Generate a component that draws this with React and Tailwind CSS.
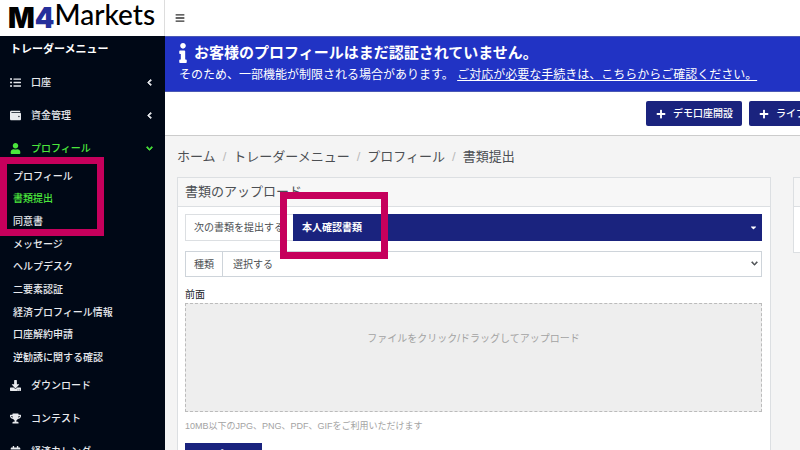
import React, { useState } from "react";
import {
  FaBars,
  FaCalendarAlt,
  FaCaretDown,
  FaChevronDown,
  FaChevronLeft,
  FaDownload,
  FaInfo,
  FaListUl,
  FaPlus,
  FaTrophy,
  FaUser,
  FaWallet,
} from "react-icons/fa";

const profileLinks = [
  "プロフィール",
  "書類提出",
  "同意書",
  "メッセージ",
  "ヘルプデスク",
  "二要素認証",
  "経済プロフィール情報",
  "口座解約申請",
  "逆勧誘に関する確認",
];

const breadcrumbs = ["ホーム", "トレーダーメニュー", "プロフィール", "書類提出"];

function Logo() {
  return (
    <a href="#" aria-label="M4Markets" className="flex h-9 shrink-0 items-center border-r border-[#ddd] bg-white pl-2">
      <span className="font-[Inter] text-[28px] font-black leading-7 text-black">M</span>
      <span className="font-[Inter] text-[28px] font-black leading-7 text-[#26309a]">4</span>
      <span className="self-start font-[Lato] text-[28px] leading-7 text-black">Markets</span>
    </a>
  );
}

function MenuItem({ icon: Icon, label, arrow: Arrow, active }) {
  return (
    <a
      href="#"
      className={`flex h-[33px] items-center pl-[10px] pr-3 ${active ? "text-[#4be63c]" : "text-[#e8eaee]"}`}
    >
      <Icon className="mr-[10px] size-[11px]" />
      <span className="flex-1">{label}</span>
      {Arrow && <Arrow className="size-[7px] stroke-current stroke-[60]" />}
    </a>
  );
}

function Sidebar() {
  return (
    <aside className="relative flex w-[165px] shrink-0 flex-col bg-[#000816] text-[10px] font-medium text-[#e8eaee]">
      <Logo />
      <h2 className="flex h-[30px] shrink-0 items-center pb-1 pl-[10px] text-[11px] font-bold text-white">
        トレーダーメニュー
      </h2>
      <nav>
        <MenuItem icon={FaListUl} label="口座" arrow={FaChevronLeft} />
        <MenuItem icon={FaWallet} label="資金管理" arrow={FaChevronLeft} />
        <MenuItem icon={FaUser} label="プロフィール" arrow={FaChevronDown} active />
        <ul className="grid h-51 grid-rows-9 pl-[13px]">
          {profileLinks.map((label) => (
            <li key={label} className="flex items-center">
              <a href="#" className={label === "書類提出" ? "text-[#4be63c]" : ""}>{label}</a>
            </li>
          ))}
        </ul>
        <MenuItem icon={FaDownload} label="ダウンロード" />
        <MenuItem icon={FaTrophy} label="コンテスト" />
        <MenuItem icon={FaCalendarAlt} label="経済カレンダー" />
      </nav>
      {/* highlight around the document links */}
      <div className="pointer-events-none absolute left-0 top-[157px] h-[79px] w-[104px] border-[7px] border-[#c6005c]" />
    </aside>
  );
}

function Banner() {
  return (
    <section className="h-14 border-y border-[#4a58b4] bg-[#2133c4] px-3 pt-1 text-white">
      <h1 className="flex items-center text-[15px] font-bold leading-6">
        <FaInfo className="mr-[5px] h-5 w-3" />
        お客様のプロフィールはまだ認証されていません。
      </h1>
      <p className="whitespace-nowrap pl-0.5 text-[12px] leading-5">
        そのため、一部機能が制限される場合があります。{" "}
        <a href="#" className="underline">ご対応が必要な手続きは、こちらからご確認ください。</a>
      </p>
    </section>
  );
}

function AccountButton({ children }) {
  return (
    <button
      type="button"
      className="flex h-[25px] items-center gap-[7px] rounded-xs bg-[#1a237e] pl-[10px] pr-[9px] text-[10px] font-medium text-white"
    >
      <FaPlus className="size-[10px]" />
      {children}
    </button>
  );
}

function UploadCard() {
  const [kind, setKind] = useState("選択する");

  return (
    <section className="min-w-0 flex-1 border border-[#dcdfe2] bg-white">
      <h2 className="h-[29px] border-b border-[#dcdfe2] bg-[#f7f7f7] px-[7px] text-[13px] leading-7">
        書類のアップロード
      </h2>
      <div className="pb-3 pl-[7px] pr-2 pt-[7px]">
        <div className="relative z-10 flex h-[27px]">
          <span
            id="doc-label"
            className="flex w-[108px] items-center overflow-hidden whitespace-nowrap border border-r-0 border-[#dcdfe2] pl-2 text-[10px]"
          >
            次の書類を提出する
          </span>
          <button
            type="button"
            aria-describedby="doc-label"
            className="flex flex-1 items-center justify-between bg-[#1a237e] pl-[9px] pr-1 text-[10px] font-bold text-white"
          >
            本人確認書類
            <FaCaretDown className="size-[9px]" />
          </button>
          {/* highlight around the selected document */}
          <div className="pointer-events-none absolute -top-[22px] left-[95px] h-[67px] w-[108px] border-[7px] border-[#c6005c]" />
        </div>

        <div className="relative mt-[10px] flex h-[26px] border border-[#ced4da] text-[10px]">
          <label htmlFor="kind" className="flex items-center border-r border-[#ced4da] px-2">種類</label>
          <select
            id="kind"
            value={kind}
            onChange={(e) => setKind(e.target.value)}
            className="flex-1 appearance-none bg-transparent pl-[10px] outline-none"
          >
            <option>選択する</option>
          </select>
          <FaChevronDown className="pointer-events-none absolute right-[3px] top-2 size-[7px] stroke-current stroke-[40]" />
        </div>

        <label htmlFor="front" className="mt-[10px] block text-[10px] leading-4 text-[#212529]">前面</label>
        <button
          id="front"
          type="button"
          className="block h-[109px] w-full border border-dashed border-[#bbb] bg-[#eee] pb-[38px] text-[10px] text-[#a3a3a3]"
        >
          ファイルをクリック/ドラッグしてアップロード
        </button>
        <p className="mt-[5px] text-[9px] leading-[18px] text-[#a3a3a3]">
          10MB以下のJPG、PNG、PDF、GIFをご利用いただけます
        </p>
        <button type="button" className="mt-2 block h-[26px] w-[77px] bg-[#1a237e] pb-1 text-[10px] font-medium text-white">
          アップロード
        </button>
      </div>
    </section>
  );
}

export default function App() {
  return (
    <div className="flex h-screen overflow-hidden bg-[#f4f4f4] font-['Liberation_Sans','Noto_Sans_CJK_JP',sans-serif] text-[#4c4f53]">
      <Sidebar />
      <main className="min-w-0 flex-1 overflow-hidden">
        <header className="flex h-9 items-center bg-white pl-[10px]">
          <button type="button" aria-label="メニュー" className="text-[#333]">
            <FaBars className="size-[10px]" />
          </button>
        </header>
        <Banner />
        {/* wider than the window, the right column runs off the screen */}
        <div className="w-[calc(100%+64px)]">
          <div className="flex h-11 items-center justify-end gap-[7px] border-b border-[#ccc] bg-white pr-[9px]">
            <AccountButton>デモ口座開設</AccountButton>
            <AccountButton>ライブ口座開設</AccountButton>
          </div>
          <nav className="flex h-[41px] items-center pl-3 text-[13px]">
            {breadcrumbs.map((name, i) => (
              <React.Fragment key={name}>
                {i > 0 && <span className="px-[7px] text-[#bbb]">/</span>}
                <a href="#">{name}</a>
              </React.Fragment>
            ))}
          </nav>
          <div className="flex items-start gap-[22px] pl-3 pr-[9px]">
            <UploadCard />
            <section className="h-[76px] w-[62px] border border-[#dcdfe2] bg-white">
              <div className="h-[29px] border-b border-[#dcdfe2] bg-[#f7f7f7]" />
            </section>
          </div>
        </div>
      </main>
    </div>
  );
}
